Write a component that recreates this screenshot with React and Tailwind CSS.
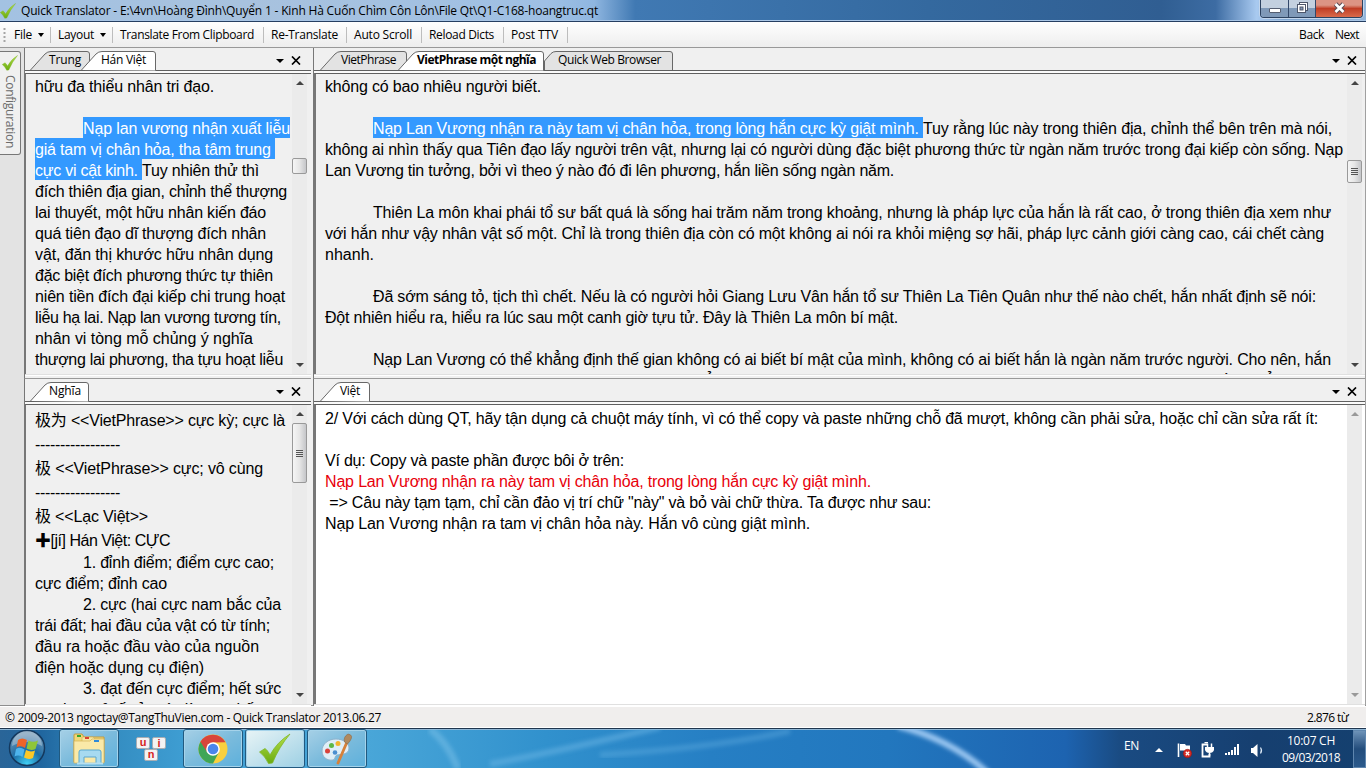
import { useLayoutEffect, useRef, useState } from 'react';

// Keeps a run of text at a fixed length by spreading the difference over its letters
const Fit = ({ w, vertical, className = '', children }) => {
  const ref = useRef(null);
  const [spacing, setSpacing] = useState(0);

  useLayoutEffect(() => {
    const box = ref.current.getBoundingClientRect();
    const natural = vertical ? box.height : box.width;
    setSpacing((w - natural) / ref.current.textContent.length);
  }, [w, vertical]);

  return (
    <span ref={ref} className={`inline-block whitespace-pre ${className}`} style={{ letterSpacing: `${spacing}px` }}>
      {children}
    </span>
  );
};

const hanVietLines = [
  [{ t: 'hữu đa thiểu nhân tri đạo.', w: 179 }],
  [],
  [{ t: 'Nạp lan vương nhận xuất liễu', w: 207, sel: true, indent: true }],
  [{ t: 'giá tam vị chân hỏa, tha tâm trung ', w: 240, sel: true }],
  [{ t: 'cực vi cật kinh. ', w: 107, sel: true }, { t: 'Tuy nhiên thử thì', w: 117 }],
  [{ t: 'đích thiên địa gian, chỉnh thể thượng', w: 252 }],
  [{ t: 'lai thuyết, một hữu nhân kiến đáo', w: 231 }],
  [{ t: 'quá tiên đạo dĩ thượng đích nhân', w: 231 }],
  [{ t: 'vật, đăn thị khước hữu nhân dụng', w: 238 }],
  [{ t: 'đặc biệt đích phương thức tự thiên', w: 238 }],
  [{ t: 'niên tiền đích đại kiếp chi trung hoạt', w: 250 }],
  [{ t: 'liễu hạ lai. Nạp lan vương tương tín,', w: 246 }],
  [{ t: 'nhân vi tòng mỗ chủng ý nghĩa', w: 218 }],
  [{ t: 'thượng lai phương, tha tựu hoạt liễu', w: 248 }],
];

const vietPhraseLines = [
  [{ t: 'không có bao nhiêu người biết.', w: 216 }],
  [],
  [
    { t: 'Nạp Lan Vương nhận ra này tam vị chân hỏa, trong lòng hắn cực kỳ giật mình. ', w: 550, sel: true, indent: true },
    { t: 'Tuy rằng lúc này trong thiên địa, chỉnh thể bên trên mà nói,', w: 409 },
  ],
  [{ t: 'không ai nhìn thấy qua Tiên đạo lấy người trên vật, nhưng lại có người dùng đặc biệt phương thức từ ngàn năm trước trong đại kiếp còn sống. Nạp', w: 1018 }],
  [{ t: 'Lan Vương tin tưởng, bởi vì theo ý nào đó đi lên phương, hắn liền sống ngàn năm.', w: 569 }],
  [],
  [{ t: 'Thiên La môn khai phái tổ sư bất quá là sống hai trăm năm trong khoảng, nhưng là pháp lực của hắn là rất cao, ở trong thiên địa xem như', w: 958, indent: true }],
  [{ t: 'với hắn như vậy nhân vật số một. Chỉ là trong thiên địa còn có một không ai nói ra khỏi miệng sợ hãi, pháp lực cảnh giới càng cao, cái chết càng', w: 999 }],
  [{ t: 'nhanh.', w: 49 }],
  [],
  [{ t: 'Đã sớm sáng tỏ, tịch thì chết. Nếu là có người hỏi Giang Lưu Vân hắn tổ sư Thiên La Tiên Quân như thế nào chết, hắn nhất định sẽ nói:', w: 943, indent: true }],
  [{ t: 'Đột nhiên hiểu ra, hiểu ra lúc sau một canh giờ tựu tử. Đây là Thiên La môn bí mật.', w: 573 }],
  [],
  [{ t: 'Nạp Lan Vương có thể khẳng định thế gian không có ai biết bí mật của mình, không có ai biết hắn là ngàn năm trước người. Cho nên, hắn', w: 958, indent: true }],
  [{ t: 'mong sao trong lòng không nghi ngờ, cũng không lo hẳn là ai đang tìm mình trong thiên địa này, cho nên càng không nghi ngờ ấy là hẳn', w: 958 }],
];

const nghiaLines = [
  [{ t: '极为 <<VietPhrase>> cực kỳ; cực là', w: 250 }],
  [{ t: '-----------------', w: 85 }],
  [{ t: '极 <<VietPhrase>> cực; vô cùng', w: 228 }],
  [{ t: '-----------------', w: 85 }],
  [{ t: '极 <<Lạc Việt>>', w: 113 }],
  [{ t: '✚[jí] Hán Việt: CỰC', w: 135 }],
  [{ t: '1. đỉnh điểm; điểm cực cao;', w: 191, indent: true }],
  [{ t: 'cực điểm; đỉnh cao', w: 132 }],
  [{ t: '2. cực (hai cực nam bắc của', w: 198, indent: true }],
  [{ t: 'trái đất; hai đầu của vật có từ tính;', w: 235 }],
  [{ t: 'đầu ra hoặc đầu vào của nguồn', w: 224 }],
  [{ t: 'điện hoặc dụng cụ điện)', w: 169 }],
  [{ t: '3. đạt đến cực điểm; hết sức', w: 198, indent: true }],
  [{ t: 'cao hơn cả; ấy ở mức là cao nhất', w: 222 }],
];

const vietLines = [
  [{ t: '2/ Với cách dùng QT, hãy tận dụng cả chuột máy tính, vì có thể copy và paste những chỗ đã mượt, không cần phải sửa, hoặc chỉ cần sửa rất ít:', w: 993 }],
  [],
  [{ t: 'Ví dụ: Copy và paste phần được bôi ở trên:', w: 299 }],
  [{ t: 'Nạp Lan Vương nhận ra này tam vị chân hỏa, trong lòng hắn cực kỳ giật mình.', w: 546, red: true }],
  [{ t: ' => Câu này tạm tạm, chỉ cần đảo vị trí chữ "này" và bỏ vài chữ thừa. Ta được như sau:', w: 606 }],
  [{ t: 'Nạp Lan Vương nhận ra tam vị chân hỏa này. Hắn vô cùng giật mình.', w: 485 }],
];

const Lines = ({ lines, tall = 0 }) => (
  <div className="min-w-0 flex-1 overflow-hidden pl-[9px] font-['Liberation_Sans','Noto_Sans_CJK_SC',sans-serif] text-[16px] text-black">
    {lines.map((runs, i) => (
      <div
        key={i}
        className={`flex whitespace-pre ${i < tall ? 'h-[24px] leading-[26px]' : 'h-[21px] leading-[21px]'} ${runs[0]?.indent ? 'pl-12' : ''}`}
      >
        {runs.map((r) => (
          <Fit
            key={r.t}
            w={r.w}
            className={r.sel ? '-mt-px h-[21px] bg-[#3399ff] leading-[23px] text-white' : r.red ? 'text-[#e8000a]' : ''}
          >
            {r.t}
          </Fit>
        ))}
      </div>
    ))}
  </div>
);

const Tab = ({ label, w, textW, pad, active, bold, cut, overlap }) => {
  const edge = cut
    ? `M0.5 19.5 V10 L7 2.5 Q9 0.5 12 0.5 H${w - 3} Q${w - 0.5} 0.5 ${w - 0.5} 3 V19.5`
    : `M0.5 19 L15 3 Q17.5 0.5 21 0.5 H${w - 3} Q${w - 0.5} 0.5 ${w - 0.5} 3 V19.5`;
  return (
    <div className={`relative h-[20px] shrink-0 ${overlap ? '-ml-[9px]' : ''} ${active ? 'z-10' : ''}`} style={{ width: w }}>
      <svg className="absolute inset-0" width={w} height="20">
        <path d={edge} fill={active ? '#fff' : '#e3e3e3'} stroke="#686868" />
        {!active && <path d={`M0 19.5 H${w}`} stroke="#606060" />}
      </svg>
      <div className="relative text-[12px] leading-[18px]" style={{ paddingLeft: pad }}>
        <Fit w={textW} className={bold ? 'font-bold' : ''}>{label}</Fit>
      </div>
    </div>
  );
};

const TabRow = ({ wide, children }) => (
  <div className="flex h-[23px] shrink-0 items-end bg-[#f0f0f0] shadow-[inset_0_-1px_0_#606060]">
    <div className={`flex ${wide ? 'pl-[6px]' : 'pl-[5px]'}`}>{children}</div>
    <div className={`ml-auto flex h-[23px] items-center gap-[7px] pt-[2px] ${wide ? 'pr-[8px]' : 'pr-[10px]'}`}>
      <svg width="8" height="4"><path d="M0 0H8L4 4Z" fill="#000" /></svg>
      <svg width="10" height="9"><path d="M1 0.5L9 8.5M9 0.5L1 8.5" stroke="#000" strokeWidth="1.7" /></svg>
    </div>
  </div>
);

const ScrollBar = ({ before, thumb, grip, off, wide }) => (
  <div className={`flex w-[15px] shrink-0 flex-col items-center bg-[#ebebeb] ${wide ? 'mr-[3px]' : 'mr-[4px]'}`}>
    <svg className="mt-[7px] shrink-0" width="8" height="4"><path d="M0 4H8L4 0Z" fill={off ? '#999' : '#444'} /></svg>
    {thumb && (
      <div
        className="flex w-[15px] shrink-0 items-center justify-center rounded-[2px] border border-[#999] bg-linear-to-r from-[#f5f5f5] via-[#e6e6e6] to-[#c5c6c9]"
        style={{ height: thumb, marginTop: before }}
      >
        {grip && (
          <div className="flex flex-col gap-px">
            <i className="h-px w-[7px] bg-[#555]" />
            <i className="h-px w-[7px] bg-[#555]" />
            <i className="h-px w-[7px] bg-[#555]" />
            <i className="h-px w-[7px] bg-[#555]" />
          </div>
        )}
      </div>
    )}
    <svg className="mb-[7px] mt-auto shrink-0" width="8" height="4"><path d="M0 0H8L4 4Z" fill={off ? '#999' : '#444'} /></svg>
  </div>
);

const Pane = ({ tabs, lines, tall, bottom, white, wide, scroll }) => (
  <section className={`flex flex-col border-l border-[#777] ${bottom ? 'h-[327px]' : 'h-[331px] border-b border-b-[#999]'}`}>
    <TabRow wide={wide}>{tabs}</TabRow>
    <div className="h-[2px] shrink-0 bg-[#fafafa]" />
    <div
      className={`flex shrink-0 overflow-hidden border-t border-l-[#777] border-t-[#606060] ${wide ? 'border-l-2' : 'border-l'} ${white ? 'bg-white' : 'bg-[#f0f0f0]'} ${bottom ? 'h-[300px]' : 'h-[301px]'}`}
    >
      <div className={`flex min-w-0 flex-1 ${bottom ? 'pt-[3px]' : 'pt-[2px]'}`}>
        <Lines lines={lines} tall={tall} />
      </div>
      <ScrollBar {...scroll} wide={wide} />
    </div>
    <div className="h-px shrink-0 bg-[#e0e0e0]" />
    <div className="h-px shrink-0 bg-white" />
  </section>
);

const Check = ({ size }) => (
  <svg width={size} height={size} viewBox="0 0 32 32" className="shrink-0">
    <defs>
      <linearGradient id="leaf" x1="0" y1="0" x2="0" y2="1">
        <stop offset="0" stopColor="#b5e04a" />
        <stop offset="1" stopColor="#6aab10" />
      </linearGradient>
    </defs>
    <path d="M0.5 19L6 15.5Q9.5 18 11 22Q18 9 31 1Q20 14 13.5 30L9.5 30.5Q6 23 0.5 19Z" fill="url(#leaf)" stroke="#7fb52a" strokeWidth="0.8" />
  </svg>
);

const Sep = () => <i className="h-[16px] w-px shrink-0 bg-[#bdbdbd]" />;
const Caret = () => <svg className="ml-[6px]" width="6" height="4"><path d="M0 0H6L3 4Z" fill="#000" /></svg>;

const TitleBar = () => (
  <header className="flex h-[22px] shrink-0 border-b border-[#263f62] bg-[linear-gradient(90deg,#a3c2e2_0%,#a8c2de_18%,#9fc0e4_40%,#8fb6e0_43.5%,#4079b3_46.5%,#34699f_68%,#305e92_85%,#3d6ca3_89%,#a9caf0_92%,#7da4cf_94%,#94b5da_100%)] shadow-[inset_0_-1px_0_#a9c6e6]">
    <div className="pt-[3px]"><Check size={16} /></div>
    <div className="pl-[5px] text-[12px] leading-[22px] text-black">
      <Fit w={577}>{'Quick Translator - E:\\4vn\\Hoàng Đình\\Quyển 1 - Kinh Hà Cuốn Chìm Côn Lôn\\File Qt\\Q1-C168-hoangtruc.qt'}</Fit>
    </div>
    <div className="ml-auto mr-[3px] flex h-[18px] overflow-hidden rounded-b-[4px] border border-t-0 border-[#2c4260] shadow-[0_0_0_1px_#c3d6ec]">
      <div className="flex w-[28px] justify-center border-r border-[#33486a] bg-linear-to-b from-[#c3d0df] from-45% to-[#7f99b8] to-50%">
        <i className="mt-[8px] h-[5px] w-[12px] rounded-[1px] border border-[#555e70] bg-white" />
      </div>
      <div className="flex w-[27px] justify-center border-r border-[#33486a] bg-linear-to-b from-[#c3d0df] from-45% to-[#7f99b8] to-50%">
        <svg className="mt-[2px]" width="13" height="12">
          <rect x="3.5" y="0.5" width="8" height="8" fill="#fff" stroke="#4d566a" />
          <rect x="1.5" y="2.5" width="8" height="8" fill="#fff" stroke="#4d566a" />
          <rect x="4" y="5" width="3" height="3" fill="#8193b0" stroke="#4d566a" />
        </svg>
      </div>
      <div className="flex w-[46px] justify-center bg-linear-to-b from-[#dc9484] from-30% via-[#c03d25] via-50% to-[#d96a4b]">
        <svg className="mt-[2px]" width="13" height="12" viewBox="0 0 13 12">
          <path d="M2.5 2L10.5 10M10.5 2L2.5 10" stroke="#5b4a52" strokeWidth="4.6" />
          <path d="M2.5 2L10.5 10M10.5 2L2.5 10" stroke="#fff" strokeWidth="2.6" />
        </svg>
      </div>
    </div>
  </header>
);

const ToolBar = () => (
  <nav className="flex h-[26px] shrink-0 items-center border-b border-[#999] bg-linear-to-b from-[#fefefe] to-[#eeeeee] text-[12px] leading-[24px] text-black">
    <svg className="ml-[3px]" width="3" height="16">
      <path d="M1.5 1V16" stroke="#a5a5a5" strokeWidth="2" strokeDasharray="2 2" />
    </svg>
    <div className="flex w-[44px] items-center pl-[8px]"><Fit w={18}>File</Fit><Caret /></div>
    <Sep />
    <div className="flex w-[61px] items-center pl-[7px]"><Fit w={36}>Layout</Fit><Caret /></div>
    <Sep />
    <div className="w-[150px] pl-[7px]"><Fit w={134}>Translate From Clipboard</Fit></div>
    <Sep />
    <div className="w-[82px] pl-[7px]"><Fit w={67}>Re-Translate</Fit></div>
    <Sep />
    <div className="w-[74px] pl-[7px]"><Fit w={58}>Auto Scroll</Fit></div>
    <Sep />
    <div className="w-[81px] pl-[7px]"><Fit w={65}>Reload Dicts</Fit></div>
    <Sep />
    <div className="w-[63px] pl-[7px]"><Fit w={47}>Post TTV</Fit></div>
    <Sep />
    <div className="ml-auto flex gap-[11px] pr-[7px]"><Fit w={25}>Back</Fit><Fit w={24}>Next</Fit></div>
  </nav>
);

const TaskButton = ({ active, children }) => (
  <div
    className={`flex h-[39px] w-[60px] items-center justify-center rounded-[3px] border border-[#215a80] shadow-[inset_0_0_0_1px_#a5d3ea] ${active ? 'bg-linear-to-br from-[#e8f4f6] to-[#9dd0e4]' : 'bg-linear-to-br from-[#a6d0e6] via-[#7bbbdc] to-[#5cb0dc]'}`}
  >
    {children}
  </div>
);

const StartOrb = () => (
  <svg width="38" height="38" viewBox="0 0 38 38">
    <defs>
      <radialGradient id="orb" cx="0.5" cy="0.95" r="0.85">
        <stop offset="0" stopColor="#3fd0f5" />
        <stop offset="0.5" stopColor="#1c6da6" />
        <stop offset="1" stopColor="#6f95b4" />
      </radialGradient>
    </defs>
    <circle cx="19" cy="19" r="17.5" fill="url(#orb)" stroke="#14395e" strokeWidth="1.5" />
    <path d="M4 17A15 15 0 0 1 34 17Q19 9 4 17Z" fill="#fff" opacity="0.3" />
    <path d="M10 11Q14 8 19 11L17 19Q13 16 8.5 18.5Z" fill="#ee6428" />
    <path d="M20.5 11.5Q25 14 30 11.5L27.5 20Q23 22 18.5 19.5Z" fill="#8ec63a" />
    <path d="M8 20Q12 17.5 16.5 20.5L14.5 28Q10.5 25.5 6.5 27.5Z" fill="#4eb4ec" />
    <path d="M18 21Q22.5 23.5 27 21.5L25 29Q20.5 31 16 28.5Z" fill="#fcc827" />
  </svg>
);

const Explorer = () => (
  <svg width="34" height="32" viewBox="0 0 34 32">
    <path d="M2 5V2Q2 1 3 1H10L12 4H32V29H2Z" fill="#f2d778" stroke="#c29b3c" />
    <path d="M5 2h4v2h-4z" fill="#35a62d" />
    <path d="M10 6V4H21L23 6H31V28H10Z" fill="#f8e6a0" stroke="#d3b256" strokeWidth="0.7" />
    <path d="M13 4h4v2h-4z" fill="#d8412f" />
    <path d="M2 8H18L20 6H32V30H2Z" fill="#fae9a8" stroke="#d3b256" strokeWidth="0.7" />
    <path d="M22 7h5v2h-5z" fill="#2f8ad8" />
    <path d="M7 19Q7 17 9 17H27Q29 17 29 19V31H24V24H12V31H7Z" fill="#a7daf0" stroke="#5aa7cf" />
    <path d="M5 30.5H31" stroke="#b5dff0" strokeWidth="2" />
  </svg>
);

const UniKey = () => (
  <svg width="32" height="26" viewBox="0 0 32 26" fontFamily="Liberation Sans, sans-serif" fontWeight="bold" fontSize="11" textAnchor="middle" fill="#d51f24">
    <rect x="1.5" y="1.5" width="13" height="11" rx="1.5" fill="#f3f3f3" stroke="#a8aeb4" />
    <rect x="17.5" y="1.5" width="13" height="11" rx="1.5" fill="#f3f3f3" stroke="#a8aeb4" />
    <rect x="9.5" y="13.5" width="13" height="11" rx="1.5" fill="#f3f3f3" stroke="#a8aeb4" />
    <text x="8" y="10">u</text>
    <text x="24" y="10.5">i</text>
    <text x="16" y="22">n</text>
  </svg>
);

const Chrome = () => (
  <svg width="30" height="30" viewBox="0 0 30 30">
    <circle cx="15" cy="15" r="14.5" fill="#f9d03f" />
    <path d="M15 15L2.44 7.75A14.5 14.5 0 0 0 15 29.5L21 18Z" fill="#3fa657" />
    <path d="M2.44 7.75A14.5 14.5 0 0 1 27.56 8.3L15 8.5L9 18Z" fill="#d8453b" />
    <circle cx="15" cy="15" r="6.8" fill="#fff" />
    <circle cx="15" cy="15" r="5.3" fill="#4a86ec" />
  </svg>
);

const Paint = () => (
  <svg width="32" height="32" viewBox="0 0 32 32">
    <path d="M15 6C7 6 1 11 1 18C1 24 6 28 12 27C15 26.5 13 23 16 22C20 21 28 22 28 15C28 10 22 6 15 6Z" fill="#dfeef7" stroke="#8fb3cc" />
    <circle cx="6.5" cy="18" r="2.5" fill="#d9423a" />
    <circle cx="10.5" cy="12.5" r="2.5" fill="#5db745" />
    <circle cx="17" cy="10.5" r="2.5" fill="#f3b52d" />
    <circle cx="14" cy="19.5" r="2.3" fill="#4b8fd0" />
    <path d="M26 9L17 30" stroke="#d6813a" strokeWidth="2.8" strokeLinecap="round" />
    <path d="M23.5 9Q22 4 27 1Q33 2 29 8L26.5 11Z" fill="#b08a5f" stroke="#8c6a48" strokeWidth="0.6" />
  </svg>
);

const Tray = () => (
  <div className="ml-auto flex h-[39px] items-center text-white">
    <div className="-mt-[6px] mr-[16px] text-[12px]"><Fit w={15}>EN</Fit></div>
    <svg className="mr-[14px] mt-[2px]" width="8" height="4"><path d="M0 4H8L4 0Z" fill="#fff" /></svg>
    <svg className="mr-[9px] mt-[3px]" width="15" height="15" viewBox="0 0 15 15">
      <path d="M1.5 0.5V14" stroke="#fff" strokeWidth="1.6" />
      <path d="M3 1H8L9 2.5H13V9H8L7 7.5H3Z" fill="#fff" />
      <circle cx="10.5" cy="10.5" r="4.2" fill="#d42a25" stroke="#8f1512" strokeWidth="0.5" />
      <path d="M8.8 8.8L12.2 12.2M12.2 8.8L8.8 12.2" stroke="#fff" strokeWidth="1.3" />
    </svg>
    <svg className="mr-[10px] mt-[2px]" width="14" height="16" viewBox="0 0 14 16">
      <path d="M6 2.5H1.5V14.5H8.5V12" fill="none" stroke="#fff" strokeWidth="1.8" />
      <path d="M3.5 0.5H7" stroke="#fff" strokeWidth="1.5" />
      <path d="M4 5H13V8Q12 11 8.5 11Q5 11 4 8Z" fill="#fff" />
      <path d="M6.5 1.5V5M10.5 1.5V5M8.5 11V14" stroke="#fff" strokeWidth="1.5" />
    </svg>
    <svg className="mr-[11px] mt-[3px]" width="15" height="12">
      <path d="M0 9h2v2h-2zM3 8h2v3h-2zM6 6h2v5h-2zM9 3h2v8h-2zM12 0h2v11h-2z" fill="#fff" />
    </svg>
    <svg className="mr-[17px] mt-[3px]" width="13" height="13">
      <path d="M0 4H2L6.5 0V13L2 9H0Z" fill="#fff" />
      <path d="M9.5 3.5Q11.5 6.5 9.5 9.5" stroke="#dbe8f5" fill="none" strokeWidth="1.2" />
    </svg>
    <div className="mr-[12px] flex w-[60px] flex-col items-center text-[12px] leading-[17px]">
      <Fit w={48}>10:07 CH</Fit>
      <Fit w={58}>09/03/2018</Fit>
    </div>
    <div className="h-[38px] w-[13px] border border-[#5f86ae] bg-linear-to-b from-[#6e93b8] via-[#234d7c] to-[#2c5a8c]" />
  </div>
);

const TaskBar = () => (
  <footer className="relative flex h-[40px] shrink-0 overflow-hidden border-t border-[#20364f] bg-[linear-gradient(90deg,#2a6598_0%,#20669f_3%,#3289bd_7%,#3f9fd4_14%,#49a6d8_27%,#3191cd_40%,#267fc4_52%,#2277be_65%,#1d63b0_78%,#1a4b82_82%,#163f70_92%,#14406f_100%)] shadow-[inset_0_1px_0_#8fb7d6]">
    {/* light streaks of the wallpaper behind the glass */}
    <svg className="absolute inset-0" width="1366" height="40">
      <defs>
        <filter id="glow"><feGaussianBlur stdDeviation="2" /></filter>
      </defs>
      <path d="M898 -3Q950 10 988 44" fill="none" stroke="#9cc8f2" strokeWidth="6" filter="url(#glow)" />
      <path d="M490 35Q560 22 660 -2" fill="none" stroke="#6fb8e6" strokeWidth="6" opacity="0.5" filter="url(#glow)" />
      <path d="M600 26Q720 18 790 2" fill="none" stroke="#6fb8e6" strokeWidth="6" opacity="0.35" filter="url(#glow)" />
      <path d="M430 0Q448 14 458 40" fill="none" stroke="#8ccbee" strokeWidth="7" opacity="0.4" filter="url(#glow)" />
    </svg>
    <div className="relative flex flex-1">
      <div className="w-[59px] pl-[8px]"><StartOrb /></div>
      <TaskButton><Explorer /></TaskButton>
      <div className="flex w-[64px] items-center justify-center"><UniKey /></div>
      <TaskButton><Chrome /></TaskButton>
      <div className="w-[2px]" />
      <TaskButton active><Check size={32} /></TaskButton>
      <div className="w-[2px]" />
      <TaskButton><Paint /></TaskButton>
      <Tray />
    </div>
  </footer>
);

const App = () => (
  <div className="flex h-[768px] w-[1366px] flex-col overflow-hidden bg-[#f0f0f0] font-['Open_Sans','Noto_Sans',sans-serif] text-black">
    <TitleBar />
    <ToolBar />
    <main className="flex h-[658px] shrink-0 border-b border-[#8e8e8e]">
      <aside className="w-[24px] shrink-0 bg-[#e3e3e3]">
        <div className="mt-[3px] flex h-[104px] w-[21px] flex-col items-center rounded-r-[3px] border border-l-0 border-[#777] bg-[#f0f0f0] pt-[3px]">
          <Check size={16} />
          <div className="mt-[4px] text-[12px] leading-[18px] text-[#6b6b6b] [writing-mode:vertical-rl]">
            <Fit vertical w={73}>Configuration</Fit>
          </div>
        </div>
      </aside>
      <div className="w-[287px] shrink-0">
        <Pane
          lines={hanVietLines}
          tabs={
            <>
              <Tab label="Trung" w={60} textW={32} pad={19} />
              <Tab label="Hán Việt" w={75} textW={45} pad={20} active overlap />
            </>
          }
          scroll={{ before: 73, thumb: 16 }}
        />
        <Pane
          bottom
          lines={nghiaLines}
          tall={6}
          tabs={<Tab label="Nghĩa" w={59} textW={32} pad={19} active />}
          scroll={{ before: 7, thumb: 60, grip: true }}
        />
      </div>
      <div className="w-[2px] shrink-0" />
      <div className="w-[1053px] shrink-0 border-r border-[#a0a0a0]">
        <Pane
          wide
          lines={vietPhraseLines}
          tabs={
            <>
              <Tab label="VietPhrase" w={87} textW={55} pad={21} />
              <Tab label="VietPhrase một nghĩa" w={146} textW={119} pad={19} active bold overlap />
              <Tab label="Quick Web Browser" w={129} textW={103} pad={14} cut />
            </>
          }
          scroll={{ before: 75, thumb: 23, grip: true }}
        />
        <Pane
          wide
          bottom
          white
          lines={vietLines}
          tabs={<Tab label="Việt" w={50} textW={20} pad={20} active />}
          scroll={{ off: true }}
        />
      </div>
    </main>
    <div className="flex h-[22px] shrink-0 items-center justify-between border-y border-white bg-[#f0eeed] pl-[5px] pr-[18px] pt-px text-[12px]">
      <Fit w={376}>© 2009-2013 ngoctay@TangThuVien.com - Quick Translator 2013.06.27</Fit>
      <Fit w={41}>2.876 từ</Fit>
    </div>
    <TaskBar />
  </div>
);

export default App;
